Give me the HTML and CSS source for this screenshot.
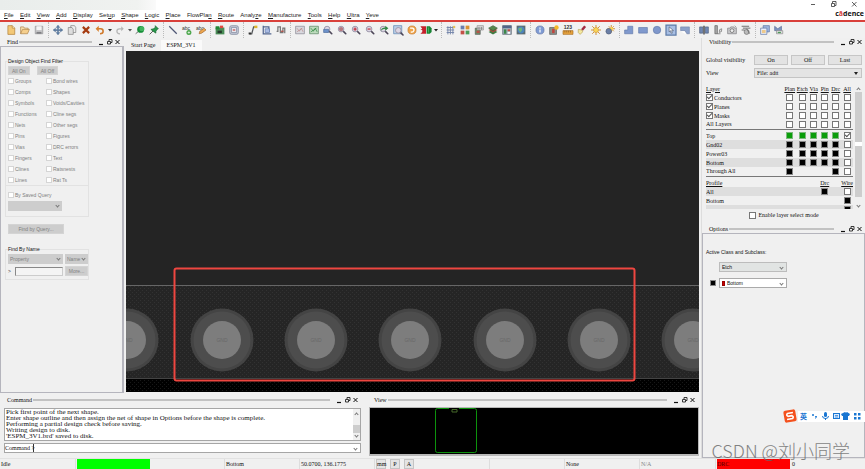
FILE: index.html
```html
<!DOCTYPE html>
<html lang="en">
<head>
<meta charset="utf-8">
<title>PCB Editor</title>
<link rel="stylesheet" href="styles.css">
</head>
<body>
<svg class="defs" aria-hidden="true">
  <symbol id="win" viewBox="0 0 24 8">
    <path d="M2 6.500h4" stroke="#111" stroke-width="1.200"/>
    <path d="M10.500 3.500h3v2.500h-3zM12 3V1.500h3v3h-1" fill="none" stroke="#222" stroke-width=".9"/>
    <path d="M18.500 2l4 4M22.500 2l-4 4" stroke="#111"/>
  </symbol>
  <symbol id="lens" viewBox="0 0 16 16">
    <path d="M9 9l5 5" stroke="#4c4658" stroke-width="2.600" stroke-linecap="round"/>
    <circle cx="6.500" cy="6.500" r="4.500" fill="#dcd6e4" stroke="#9a94a8" stroke-width="1.500"/>
  </symbol>
</svg>

<header class="top">
  <div class="shade"></div>
  <nav class="menu">
    <a href="#"><u>F</u>ile</a><a href="#"><u>E</u>dit</a><a href="#"><u>V</u>iew</a><a href="#"><u>A</u>dd</a><a href="#"><u>D</u>isplay</a><a href="#">Set<u>u</u>p</a><a href="#"><u>S</u>hape</a><a href="#"><u>L</u>ogic</a><a href="#"><u>P</u>lace</a><a href="#">FlowPla<u>n</u></a><a href="#"><u>R</u>oute</a><a href="#">Analy<u>z</u>e</a><a href="#"><u>M</u>anufacture</a><a href="#"><u>T</u>ools</a><a href="#"><u>H</u>elp</a><a href="#"><u>U</u>ltra</a><a href="#"><u>Y</u>eve</a>
  </nav>
  <div class="brand">
    <svg class="window-buttons" viewBox="0 0 50 8"><path d="M2 4.500h4M22.500 3.500h3v3h-3zM23.500 3V1.500h3.500v4h-1M43 2l4.500 4.500M47.500 2L43 6.500" fill="none" stroke="#333" stroke-width=".8"/></svg>
    <div class="logo">c<i>ā</i>dence</div>
  </div>
</header>

<div class="toolbar">
  <div class="group">
    <button aria-label="New"><svg viewBox="0 0 16 16"><path d="M3 1h7l4 4v10H3z" fill="#f3c877" stroke="#a8742c"/><path d="M10 1v4h4" fill="#fff0c8" stroke="#a8742c"/></svg></button>
    <button aria-label="Open"><svg viewBox="0 0 16 16"><path d="M1 14V3h5l1 2h6v3" fill="#f7dfb0" stroke="#a8793c"/><path d="M1 14l3-7h11l-3 7z" fill="#f5cf8d" stroke="#a8793c"/></svg></button>
    <button aria-label="Save"><svg viewBox="0 0 16 16"><path d="M2 2h12v12H2z" fill="#c7c7c9" stroke="#8c8c8e"/><path d="M4 2h8v6H4z" fill="#f5f5f5"/><path d="M4 11h8v3H4z" fill="#808084"/></svg></button>
  </div>
  <div class="group">
    <button aria-label="Move"><svg viewBox="0 0 16 16"><path d="M8 0l3 4H9v3h3V5l4 3-4 3V9H9v3h2l-3 4-3-4h2V9H4v2L0 8l4-3v2h3V4H5z" fill="#5d7da3" stroke="#3e5c80" stroke-width=".5"/></svg></button>
    <button aria-label="Copy"><svg viewBox="0 0 16 16"><path d="M6 1h6l2 3v8H6z" fill="#eee" stroke="#777"/><path d="M2 4h6l2 3v8H2z" fill="#ddd" stroke="#777"/></svg></button>
    <button aria-label="Delete"><svg viewBox="0 0 16 16"><path d="M3 3l10 10M13 3L3 13" stroke="#a53b10" stroke-width="3.500"/></svg></button>
    <button aria-label="Undo"><svg viewBox="0 0 16 16"><path d="M4 6h5q4 0 4 4t-5 4" fill="none" stroke="#d07a2c" stroke-width="2.500"/><path d="M6 1v10L1 6z" fill="#d9812e"/></svg></button>
    <button class="more" aria-label="Undo list"><svg viewBox="0 0 6 6"><path d="M1 2h4L3 4.500z" fill="#333"/></svg></button>
    <button aria-label="Redo"><svg viewBox="0 0 16 16"><path d="M12 6H7q-4 0-4 4t5 4" fill="none" stroke="#b5b5b5" stroke-width="2"/><path d="M10 2v8l4-4z" fill="#b5b5b5"/></svg></button>
    <button class="more" aria-label="Redo list"><svg viewBox="0 0 6 6"><path d="M1 2h4L3 4.500z" fill="#555"/></svg></button>
    <button aria-label="Unpin"><svg viewBox="0 0 16 16"><path d="M1 14l6-5" stroke="#666" stroke-width="1.500"/><circle cx="9" cy="7" r="5.500" fill="#138b36"/><circle cx="11" cy="6" r="4" fill="#41b35d"/></svg></button>
    <button aria-label="Pin"><svg viewBox="0 0 16 16"><path d="M1 15l6-6" stroke="#555" stroke-width="1.500"/><path d="M10 1l5 5-2 1-2 3 0 3-3-2-5-4 4-1 3-2z" fill="#28974a" stroke="#17652e"/></svg></button>
  </div>
  <div class="group">
    <button aria-label="Add line"><svg viewBox="0 0 16 16"><path d="M2 2l12 12" stroke="#4e5674" stroke-width="2"/></svg></button>
    <button aria-label="Add text"><svg viewBox="0 0 16 16"><text x="0" y="8" font-size="8">abc</text><circle cx="11" cy="12" r="4" fill="#48a548"/><path d="M11 10v4M9 12h4" stroke="#fff"/></svg></button>
    <button aria-label="Edit text"><svg viewBox="0 0 16 16"><text x="0" y="8" font-size="8">abc</text><path d="M5 14l1-4 7-5 3 3-7 5z" fill="#eca64f" stroke="#9d6128"/></svg></button>
  </div>
  <div class="group">
    <button aria-label="Place"><svg viewBox="0 0 16 16"><path d="M1 4h14v11H1z" fill="#4a8d57"/><path d="M1 2h6v5H1z" fill="#208736"/><path d="M8 1h5v4H8z" fill="#df4b42"/><path d="M4 9h7v4H4z" fill="#263b2b"/></svg></button>
    <button aria-label="Component"><svg viewBox="0 0 16 16"><rect x="1" y="1" width="14" height="14" rx="3" fill="#bfc5d4" stroke="#777f94"/><path d="M4 4h8v8H4z" fill="#e7e7ee" stroke="#7c8398"/><path d="M6 8h4" stroke="#c35048" stroke-width="2"/></svg></button>
  </div>
  <div class="group">
    <button aria-label="Route"><svg viewBox="0 0 16 16"><path d="M2 14h4l3-11h5" fill="none" stroke="#55585b" stroke-width="2"/><path d="M10 1h5v4h-5z" fill="#dfb52c"/><path d="M1 12h4v3H1z" fill="#333"/></svg></button>
    <button aria-label="Slide"><svg viewBox="0 0 16 16"><path d="M2 1v13h13M2 3h9v8" fill="none" stroke="#52658f" stroke-width="2"/><path d="M5 6h7v6H5z" fill="#aabbe2" stroke="#5973ab"/></svg></button>
    <button aria-label="Delay tune"><svg viewBox="0 0 16 16"><path d="M1 10h2V3h4v9h4V5h3v8" fill="none" stroke="#777" stroke-width="2"/><path d="M8 10h4" stroke="#b54c44" stroke-width="2"/></svg></button>
  </div>
  <div class="group">
    <button aria-label="Unrats"><svg viewBox="0 0 16 16"><path d="M1 2h14v12H1z" fill="#d9d9df" stroke="#7d7b89"/><path d="M3 5l4 5 3-5 3 6M3 11l9-6" fill="none" stroke="#b98986"/></svg></button>
    <button aria-label="Rats"><svg viewBox="0 0 16 16"><path d="M1 2h14v12H1z" fill="#bddbbd" stroke="#4c7954"/><path d="M3 5l4 5 3-5 3 6M3 11l9-6" fill="none" stroke="#257e37"/></svg></button>
    <button aria-label="Zoom window"><svg viewBox="0 0 16 16"><use href="#lens"/><path d="M1 7h8v5H1z" fill="#6d91c9" stroke="#47669a"/></svg></button>
    <button aria-label="Zoom fit"><svg viewBox="0 0 16 16"><use href="#lens"/><circle cx="6.500" cy="6.500" r="3.500" fill="#b47a82"/></svg></button>
    <button aria-label="Zoom in"><svg viewBox="0 0 16 16"><use href="#lens"/><path d="M4 6.500h5M6.500 4v5" stroke="#c33540" stroke-width="2"/></svg></button>
    <button aria-label="Zoom out"><svg viewBox="0 0 16 16"><use href="#lens"/><path d="M4 6.500h5" stroke="#c33540" stroke-width="2"/></svg></button>
    <button aria-label="Zoom previous"><svg viewBox="0 0 16 16"><use href="#lens"/><path d="M3 9q1-5 7-5V1l5 4-5 4V6q-4 0-7 3z" fill="#2e8843"/></svg></button>
    <button aria-label="Zoom selection"><svg viewBox="0 0 16 16"><path d="M1 1h13v13H1z" fill="#b9d0e9" stroke="#527aac"/><use href="#lens" x="2" y="2"/></svg></button>
    <button aria-label="Refresh"><svg viewBox="0 0 16 16"><circle cx="8" cy="8" r="6.500" fill="#efa449" stroke="#c07427"/><path d="M5 5h4q3 1 2 4t-5 2" fill="none" stroke="#fff" stroke-width="2"/></svg></button>
    <button aria-label="3D view"><svg viewBox="0 0 16 16"><path d="M-1 2h9v12h-9l3-3V8h-3l3-2z" fill="#c5202b"/><path d="M9 2h5l3 3v6l-3 3H9z" fill="#188434"/><path d="M12 4v8" stroke="#63bd75"/></svg></button>
    <button class="more" aria-label="Views"><svg viewBox="0 0 6 6"><path d="M1 2h4L3 4.500z" fill="#222"/></svg></button>
  </div>
  <div class="group">
    <button aria-label="Grid"><svg viewBox="0 0 16 16"><path d="M1 4h12M1 8h12M1 12h12M3 2v13M7 2v13M11 2v13" stroke="#7485aa" stroke-width="1.500"/><circle cx="13" cy="3" r="2" fill="#e6c35b"/></svg></button>
    <button aria-label="Colors"><svg viewBox="0 0 16 16"><path d="M1 1h6v6H1z" fill="#687cae"/><path d="M9 1h6v6H9z" fill="#d99233"/><path d="M1 9h6v6H1z" fill="#c35047"/><path d="M9 9h6v6H9z" fill="#4c9c58"/></svg></button>
    <button aria-label="Shadow"><svg viewBox="0 0 16 16"><path d="M2 5h8v10H2z" fill="#69946b" stroke="#555"/><path d="M5 1h10v7H5z" fill="#ddd" stroke="#888"/><path d="M8 3v5M12 3v5M5 5h9" stroke="#777"/><path d="M4 9h5v4H4z" fill="#b85349"/></svg></button>
    <button aria-label="Layers"><svg viewBox="0 0 16 16"><path d="M1 11l7-4 7 4-7 4z" fill="#407d44"/><path d="M1 8l7-4 7 4-7 4z" fill="#a24c3c"/><path d="M1 5l7-4 7 4-7 4z" fill="#55874d" stroke="#375b37"/></svg></button>
    <button aria-label="Constraint manager"><svg viewBox="0 0 16 16"><path d="M1 1h14v14H1z" fill="#a4b0bd" stroke="#57606b"/><path d="M1 1h14v4H1z" fill="#52658a"/><path d="M3 7h4v7H3z" fill="#3c8749"/><path d="M9 7h4v3H9z" fill="#c44b40"/><path d="M9 11h4v3H9z" fill="#fff"/></svg></button>
    <button aria-label="World"><svg viewBox="0 0 16 16"><path d="M1 1h14v14H1z" fill="#5c6c70"/><circle cx="8" cy="8" r="5.500" fill="#4c84bd"/><path d="M4 5l5-1 1 4-3 4-3-4z" fill="#72b478"/></svg></button>
  </div>
  <div class="group">
    <button aria-label="Info"><svg viewBox="0 0 16 16"><circle cx="8" cy="8" r="6.500" fill="#7f9bd4" stroke="#6577a4"/><path d="M8 7v5M8 4v2" stroke="#fff" stroke-width="2"/></svg></button>
    <button aria-label="Status"><svg viewBox="0 0 16 16"><path d="M1 4h11v11H1z" fill="#8a928b" stroke="#555"/><path d="M5 6h4v7H5z" fill="#c4443d"/><circle cx="12" cy="4" r="3.500" fill="#f4b829"/></svg></button>
    <button aria-label="Measure"><svg viewBox="0 0 16 16"><text x="1" y="7" font-size="8" font-weight="bold">123</text><path d="M0 9h16v6H0z" fill="#e6a33e" stroke="#a56b1e"/><path d="M3 9v3M6 9v3M9 9v3M12 9v3" stroke="#875719"/></svg></button>
    <button aria-label="Highlight"><svg viewBox="0 0 16 16"><path d="M8 8l5-6" stroke="#a22c43" stroke-width="4"/><path d="M2 7l6 1 1 3-4 4-3-3z" fill="#f4e8a0" stroke="#b09c50"/></svg></button>
    <button aria-label="Sun"><svg viewBox="0 0 16 16"><path d="M8 0v16M0 8h16M2 2l12 12M14 2L2 14" stroke="#cf8c32" stroke-width="1.500"/><circle cx="8" cy="8" r="4" fill="#f9d65a" stroke="#d29733"/></svg></button>
    <button aria-label="Dim"><svg viewBox="0 0 16 16"><path d="M10 0v12M4 6h12M6 2l8 8M14 2L6 10" stroke="#cf8c32" stroke-width="1.500"/><circle cx="10" cy="6" r="3" fill="#f9d65a"/><circle cx="6" cy="10" r="4.500" fill="#6b7fa6" stroke="#4e5b77"/></svg></button>
  </div>
  <div class="group">
    <button aria-label="Polygon"><svg viewBox="0 0 16 16"><path d="M6 2h8v12H1V8h5z" fill="#8099cd" stroke="#5e76a7"/></svg></button>
    <button aria-label="Rectangle"><svg viewBox="0 0 16 16"><path d="M1 4h14v9H1z" fill="#8099cd" stroke="#5e76a7"/></svg></button>
    <button aria-label="Circle"><svg viewBox="0 0 16 16"><circle cx="8" cy="8" r="6" fill="#7f97cb" stroke="#5e76a7"/></svg></button>
    <button aria-label="Select shape"><svg viewBox="0 0 16 16"><path d="M0 0h16v16H0z" fill="#a8bfe4" stroke="#5e7ca8" stroke-width="2"/><path d="M5 3l7 6H9l1 4-2 0-1-4-2 2z" fill="#fff" stroke="#49566d"/></svg></button>
    <button aria-label="Void"><svg viewBox="0 0 16 16"><path d="M1 3h14v11h-4L8 9H1z" fill="#8ba0c9" stroke="#7284aa"/><path d="M1 10h6l3 5z" fill="#fff"/></svg></button>
  </div>
  <div class="group">
    <button aria-label="Mirror"><svg viewBox="0 0 16 16"><path d="M1 3h5v10H1zM10 3h5v10h-5z" fill="#6f87b4" stroke="#4a5a78"/><path d="M8 1v14" stroke="#333" stroke-width="2"/></svg></button>
    <button aria-label="Align"><svg viewBox="0 0 16 16"><path d="M3 1h4v13H3z" fill="#aaa" stroke="#555"/><path d="M7 14h5" stroke="#555"/><path d="M14 6q-5 0-4 6 5 0 4-6z" fill="#ddd" stroke="#666"/></svg></button>
    <button aria-label="Snapshot"><svg viewBox="0 0 16 16"><path d="M1 5h4l1-2h5l1 2h3v9H1z" fill="#c8c8ca" stroke="#77777a"/><circle cx="8" cy="9" r="3" fill="#eee" stroke="#555"/><path d="M12 1l3 3" stroke="#666"/></svg></button>
    <button aria-label="Artwork"><svg viewBox="0 0 16 16"><path d="M1 2h12M3 5h12M1 8h5" stroke="#666" stroke-width="1.500"/><circle cx="9" cy="11" r="4" fill="#bbb" stroke="#666"/><path d="M9 6l5 8" stroke="#555"/></svg></button>
  </div>
  <div class="group">
    <button aria-label="Windows"><svg viewBox="0 0 16 16"><path d="M5 1h10v10H5z" fill="#9db5df" stroke="#536c9b"/><path d="M1 5h10v10H1z" fill="#e9eefb" stroke="#536c9b"/><path d="M3 8h6v5H3z" fill="#eec98b"/></svg></button>
    <button aria-label="Export"><svg viewBox="0 0 16 16"><path d="M1 2l5 4 6-4v7H1z" fill="#7d93bf" stroke="#5b6e96"/><path d="M4 9h10v5H4z" fill="#ddd" stroke="#888"/><path d="M6 12h5" stroke="#4c9c58" stroke-width="2"/></svg></button>
  </div>
</div>

<main class="work">
  <div class="left">
    <div class="upper">
      <section class="find">
        <div class="dock-title"><span>Find</span><hr><svg><use href="#win"/></svg></div>
        <div class="find-body">
          <fieldset>
            <legend>Design Object Find Filter</legend>
            <div class="pair"><button class="flat">All On</button><button class="flat">All Off</button></div>
            <div class="filters">
              <label><input type="checkbox">Groups</label><label><input type="checkbox">Bond wires</label>
              <label><input type="checkbox">Comps</label><label><input type="checkbox">Shapes</label>
              <label><input type="checkbox">Symbols</label><label><input type="checkbox">Voids/Cavities</label>
              <label><input type="checkbox">Functions</label><label><input type="checkbox">Cline segs</label>
              <label><input type="checkbox">Nets</label><label><input type="checkbox">Other segs</label>
              <label><input type="checkbox">Pins</label><label><input type="checkbox">Figures</label>
              <label><input type="checkbox">Vias</label><label><input type="checkbox">DRC errors</label>
              <label><input type="checkbox">Fingers</label><label><input type="checkbox">Text</label>
              <label><input type="checkbox">Clines</label><label><input type="checkbox">Ratsnests</label>
              <label><input type="checkbox">Lines</label><label><input type="checkbox">Rat Ts</label>
            </div>
          </fieldset>
          <div class="saved">
            <label><input type="checkbox">By Saved Query</label>
            <div class="select gray"><select aria-label="Saved query"><option></option></select></div>
          </div>
          <button class="flat query">Find by Query...</button>
          <fieldset class="by-name">
            <legend>Find By Name</legend>
            <div class="name-grid">
              <div class="select gray"><select aria-label="Kind"><option>Property</option></select></div>
              <div class="select gray"><select aria-label="Match"><option>Name</option></select></div>
              <div class="prompt"><label for="name">&gt;</label><input id="name" type="text"></div>
              <button class="flat">More...</button>
            </div>
          </fieldset>
        </div>
      </section>
      <section class="design">
        <div class="tabs"><button>Start Page</button><button class="active">ESPM_3V1</button></div>
        <svg class="board" viewBox="126 51 573 341" preserveAspectRatio="xMidYMax slice">
          <defs>
            <pattern id="mesh" width="4" height="4" patternUnits="userSpaceOnUse"><path d="M0 0h4v4H0z" fill="#252525"/><path d="M0 0h1v1H0zM2 2h1v1H2z" fill="#323232"/></pattern>
            <pattern id="dots" width="4" height="4" patternUnits="userSpaceOnUse"><path d="M0 0h4v4H0z" fill="#000"/><path d="M0 0h1v1H0zM2 2h1v1H2z" fill="#181818"/></pattern>
            <g id="pad">
              <circle r="31.500" fill="#444"/>
              <circle r="28.500" fill="#4d4d4d"/>
              <circle r="19" fill="#7d7d7d"/>
            </g>
          </defs>
          <path d="M126 51h573v235H126z" fill="#242424"/>
          <path d="M126 286h573v93H126z" fill="url(#mesh)"/>
          <path d="M126 379h573v13H126z" fill="url(#dots)"/>
          <path d="M126 285.500h573" stroke="#666"/>
          <path d="M126 378.500h573" stroke="#444"/>
          <use href="#pad" x="127" y="340"/>
          <use href="#pad" x="222" y="340"/>
          <use href="#pad" x="316" y="340"/>
          <use href="#pad" x="410" y="340"/>
          <use href="#pad" x="505" y="340"/>
          <use href="#pad" x="599" y="340"/>
          <use href="#pad" x="693" y="340"/>
          <g class="net" text-anchor="middle">
            <text x="127" y="342">GND</text><text x="222" y="342">GND</text><text x="316" y="342">GND</text><text x="410" y="342">GND</text><text x="505" y="342">GND</text><text x="599" y="342">GND</text><text x="693" y="342">GND</text>
          </g>
          <rect x="174.500" y="268.500" width="460" height="112" rx="2" fill="none" stroke="#ee4640" stroke-width="2"/>
        </svg>
      </section>
    </div>
    <div class="lower">
      <section class="command">
        <div class="dock-title"><span>Command</span><hr><svg><use href="#win"/></svg></div>
        <div class="log">
          <div class="lines">
            <p>Pick first point of the next shape.</p>
            <p>Enter shape outline and then assign the net of shape in Options before the shape is complete.</p>
            <p>Performing a partial design check before saving.</p>
            <p>Writing design to disk.</p>
            <p>'ESPM_3V1.brd' saved to disk.</p>
          </div>
          <div class="scroll"><i class="up"></i><b></b><i class="down"></i></div>
        </div>
        <div class="entry"><label for="cmd">Command &gt;</label><input id="cmd" type="text"><i class="down"></i></div>
      </section>
      <section class="view">
        <div class="dock-title"><span>View</span><hr><svg><use href="#win"/></svg></div>
        <svg class="overview" viewBox="0 0 328 46" preserveAspectRatio="xMidYMid meet"><rect x="65.500" y=".5" width="41" height="44" rx="2" fill="none" stroke="#0c920c"/><path d="M79 .5h10" stroke="#000" stroke-width="2"/><path d="M82 4V1.500h5V4z" fill="none" stroke="#466b2a"/></svg>
      </section>
    </div>
  </div>

  <aside class="right">
    <section>
      <div class="dock-title"><span>Visibility</span><hr><svg><use href="#win"/></svg></div>
      <div class="vis">
        <div class="row"><span>Global visibility</span><div class="trio"><button>On</button><button>Off</button><button>Last</button></div></div>
        <div class="row"><label for="view">View</label><div class="select solid"><select id="view"><option>File: adtt</option></select></div></div>
        <div class="layers">
          <table>
            <thead><tr><th>Layer</th><th>Plan</th><th>Etch</th><th>Via</th><th>Pin</th><th>Drc</th><th>All</th></tr></thead>
            <tbody>
              <tr><td><label><input type="checkbox" checked>Conductors</label></td><td><input type="checkbox"></td><td><input type="checkbox"></td><td><input type="checkbox"></td><td><input type="checkbox"></td><td><input type="checkbox"></td><td><input type="checkbox"></td></tr>
              <tr><td><label><input type="checkbox" checked>Planes</label></td><td><input type="checkbox"></td><td><input type="checkbox"></td><td><input type="checkbox"></td><td><input type="checkbox"></td><td><input type="checkbox"></td><td><input type="checkbox"></td></tr>
              <tr><td><label><input type="checkbox" checked>Masks</label></td><td><input type="checkbox"></td><td><input type="checkbox"></td><td><input type="checkbox"></td><td><input type="checkbox"></td><td><input type="checkbox"></td><td><input type="checkbox"></td></tr>
              <tr><td>All Layers</td><td><input type="checkbox"></td><td><input type="checkbox"></td><td><input type="checkbox"></td><td><input type="checkbox"></td><td><input type="checkbox"></td><td><input type="checkbox"></td></tr>
            </tbody>
            <tbody class="ruled">
              <tr><td>Top</td><td><input type="checkbox" class="green"></td><td><input type="checkbox" class="green"></td><td><input type="checkbox" class="green"></td><td><input type="checkbox" class="green"></td><td><input type="checkbox" class="green"></td><td><input type="checkbox" checked></td></tr>
              <tr class="alt"><td>Gnd02</td><td><input type="checkbox" class="black"></td><td><input type="checkbox" class="black"></td><td><input type="checkbox" class="black"></td><td><input type="checkbox" class="black"></td><td><input type="checkbox" class="black"></td><td><input type="checkbox"></td></tr>
              <tr><td>Power03</td><td><input type="checkbox" class="black"></td><td><input type="checkbox" class="black"></td><td><input type="checkbox" class="black"></td><td><input type="checkbox" class="black"></td><td><input type="checkbox" class="black"></td><td><input type="checkbox"></td></tr>
              <tr class="alt"><td>Bottom</td><td><input type="checkbox" class="black"></td><td><input type="checkbox" class="black"></td><td><input type="checkbox" class="black"></td><td><input type="checkbox" class="black"></td><td><input type="checkbox" class="black"></td><td><input type="checkbox"></td></tr>
              <tr><td>Through All</td><td><input type="checkbox" class="black"></td><td></td><td></td><td></td><td><input type="checkbox" class="black"></td><td><input type="checkbox"></td></tr>
            </tbody>
            <tbody class="ruled">
              <tr><th>Profile</th><th></th><th></th><th></th><th>Drc</th><th></th><th>Wire</th></tr>
              <tr class="alt"><td>All</td><td></td><td></td><td></td><td><input type="checkbox" class="black"></td><td></td><td><input type="checkbox"></td></tr>
              <tr><td>Bottom</td><td></td><td></td><td></td><td></td><td></td><td><input type="checkbox" class="black"></td></tr>
              <tr class="alt"><td></td><td></td><td></td><td></td><td></td><td></td><td><input type="checkbox" class="black"></td></tr>
            </tbody>
          </table>
          <div class="scroll"><i class="up"></i><b></b><i class="down"></i></div>
        </div>
        <label class="enable"><input type="checkbox">Enable layer select mode</label>
      </div>
    </section>
    <section class="options">
      <div class="dock-title"><span>Options</span><hr><svg><use href="#win"/></svg></div>
      <div class="options-body">
        <p>Active Class and Subclass:</p>
        <div class="class-row"><div class="select tint"><select aria-label="Class"><option>Etch</option></select></div></div>
        <div class="class-row"><input type="checkbox" class="black" aria-label="Visible"><div class="select plain"><span class="chip"></span><select aria-label="Subclass"><option>Bottom</option></select></div></div>
      </div>
    </section>
  </aside>
</main>

<footer class="status">
  <span>Idle</span><span class="go"><b></b></span><span>Bottom</span><span>50.0700, 136.1775</span>
  <span class="modes"><button>mm</button><button>P</button><button>A</button></span>
  <span></span><span>None</span><span class="dim">N/A</span><span class="drc"><b>DRC</b>0</span>
</footer>

<div class="ime">
  <svg viewBox="0 0 84 16">
    <path d="M17 3h67v11H17z" fill="#fff"/>
    <g transform="rotate(-10 9 8)"><rect x="3" y="2" width="12" height="12" rx="2" fill="#f4511e"/><path d="M12.500 5H7q-2 1.500 0 3h4q2 1.500 0 3H5.500" fill="none" stroke="#fff" stroke-width="1.600"/></g>
    <text x="19" y="11" class="ime-text">英</text>
    <g fill="#1976d2" stroke="none">
      <circle cx="32" cy="7" r="1"/><path d="M34 8h2q0 2-2 3 1-1 0-3z"/>
      <rect x="43" y="4" width="3" height="5" rx="1.500"/><path d="M41.500 8q0 2.500 3 2.500t3-2.500" fill="none" stroke="#1976d2"/><path d="M44 10h1v2h-1z"/>
      <path d="M62 5l2-1q1 1 2 0l3 2-1 2h-1v4h-5V8h-1l-1-2z"/>
      <path d="M73 5h2.500v2.500H73zM77 5h2.500v2.500H77zM73 9h2.500v2.500H73zM77 9h2.500v2.500H77z"/>
    </g>
    <rect x="52.500" y="5.500" width="6" height="5" fill="#dcecff" stroke="#1976d2"/><path d="M54 7.500h3M54 9h3" stroke="#1976d2" stroke-width=".7"/>
  </svg>
</div>
<div class="watermark">CSDN @刘小同学</div>
</body>
</html>
```

FILE: styles.css
```css
*, ::before, ::after { box-sizing: border-box; }
body {
  margin: 0;
  min-height: 100vh;
  display: flex;
  flex-direction: column;
  position: relative;
  overflow: hidden;
  background: #f0f0f0;
  color: #111;
  font: 6px/8px "Liberation Serif", serif;
}
button, input, select { font: inherit; color: inherit; margin: 0; padding: 0; border: 0; background: none; border-radius: 0; }
input, select { appearance: none; outline: 0; min-width: 0; }
p, hr, fieldset { margin: 0; padding: 0; border: 0; min-width: 0; }
svg { display: block; }
.defs { position: absolute; width: 0; height: 0; }

/* Menu bar */
.top { display: grid; grid-template-columns: 1fr auto; height: 22px; background: #fff; border-bottom: 2px solid #d9403a; }
.shade { grid-area: 1 / 1; width: 156px; height: 10px; background: linear-gradient(90deg, #e9edeb, #f0f2f0 88%, #fafafa); }
.menu { grid-area: 1 / 1; align-self: end; display: flex; justify-content: space-between; max-width: 383px; padding: 0 4px 1px; font: 6px/8px "Liberation Sans", sans-serif; }
.menu a { color: #222; text-decoration: none; }
.brand { grid-area: 1 / 2; display: flex; flex-direction: column; align-items: flex-end; }
.window-buttons { width: 50px; height: 8px; margin: 0 6px 2px 0; }
.logo { padding-right: 1px; font: bold 7px/8px "Open Sans", sans-serif; }
.logo i { color: #d9403a; font-style: normal; }

/* Toolbar */
.toolbar { display: flex; height: 16px; padding: 0 4px; background: #f1f1f1; }
.group { display: flex; align-items: center; }
.group + .group { margin-left: 2px; padding-left: 2px; border-left: 1px dotted #bbb; }
.group button { width: 14px; height: 14px; padding: 2px; }
.group button svg { width: 10px; height: 10px; overflow: visible; }
.group .more { width: 6px; padding: 0; }
.group .more svg { width: 6px; height: 6px; }
.group text { font-family: "Liberation Sans", sans-serif; fill: #333; }

/* Dock frames */
.work { flex: 1; display: grid; grid-template-columns: minmax(0, 1fr) 164px; }
.left { display: flex; flex-direction: column; min-width: 0; }
.upper { flex: 1; display: grid; grid-template-columns: 124px minmax(0, 1fr); }
.lower { display: grid; grid-template-columns: 362fr 337fr; padding: 3px 2px 2px 0; }
.dock-title { display: flex; align-items: center; height: 8px; padding: 0 3px 0 7px; gap: 1px; }
.dock-title hr { flex: 1; height: 2px; background: #c2c2c2; margin-right: 4px; }
.dock-title svg { width: 24px; height: 8px; }

/* Find */
.find { display: flex; flex-direction: column; font: 5px/8px "Liberation Sans", sans-serif; color: #808080; }
.dock-title span { font: 6px/8px "Liberation Serif", serif; color: #111; }
.find-body { flex: 1; padding: 10px 33px 0 4px; border: 1px solid #b5b5bd; border-right-width: 2px; }
.find fieldset { border: 1px solid #e2e2e2; padding: 0 2px; }
.find legend { padding: 0; color: #111; }
.pair { display: flex; gap: 7px; padding-top: 1px; }
.flat { height: 9px; padding: 0 3px; background: #cdcdcd; line-height: 8px; color: #808080; border: 1px solid #d4d4d4; }
.filters { display: grid; grid-template-columns: 38px 1fr; grid-auto-rows: 11px; align-items: center; }
.filters label, .saved label { display: flex; align-items: center; gap: 1px; white-space: nowrap; }
.filters input, .saved input { flex: none; width: 6px; height: 6px; background: #fff; border: 1px solid #d5d5d5; }
.saved { display: grid; gap: 2px; padding: 5px 26px 5px 2px; border: 1px solid #e2e2e2; border-top: 0; }
.query { display: block; width: 56px; height: 10px; margin: 7px 0 11px 3px; }
.find .by-name { padding-right: 0; }
.name-grid { display: grid; grid-template-columns: 55px 1fr; gap: 2px; padding: 1px 0 3px; }
.name-grid .flat { height: 10px; padding: 0; }
.prompt { display: flex; gap: 4px; align-items: center; color: #333; }
.prompt input { flex: 1; height: 9px; border: 1px solid #ccc; border-top-color: #888; border-left-color: #888; background: #f4f4f4; }

/* Drop-downs */
.select { position: relative; display: flex; align-items: center; height: 10px; }
.select select { flex: 1; width: 100%; height: 100%; padding-left: 2px; line-height: 8px; }
.select::after, .up, .down { content: ""; width: 3px; height: 3px; border: solid #777; border-width: 0 1px 1px 0; transform: rotate(45deg); }
.select::after { position: absolute; right: 3px; top: 3px; }
.up { transform: rotate(225deg); }
.gray { background: #cdcdcd; }
.solid { background: #e4e4e4; border: 1px solid #c4c4c4; }
.solid::after { width: 0; height: 0; border: 2px solid transparent; border-top: 3px solid #222; border-bottom: 0; transform: none; }
.tint { background: #e1e4e3; border: 1px solid #bcbcbc; }
.plain { background: #fff; border: 1px solid #aaa; }

/* Design canvas */
.design { display: flex; flex-direction: column; min-width: 0; padding: 2px 2px 1px 2px; }
.tabs { display: flex; height: 11px; }
.tabs button { padding: 0 5px; line-height: 11px; }
.tabs .active { background: #fafafa; padding: 0 6px; }
.board { flex: 1; width: 100%; min-height: 0; }
.net { font: 5px "Liberation Sans", sans-serif; fill: #686868; }

/* Command */
.log { display: flex; height: 33px; margin: 4px 1px 2px 4px; background: #fff; border: 1px solid #a6a6a6; overflow: hidden; }
.lines { flex: 1; display: flex; flex-direction: column; justify-content: flex-end; font-size: 7px; line-height: 6px; padding: 0 1px 1px; white-space: nowrap; }
.scroll { display: flex; flex-direction: column; align-items: center; justify-content: space-between; width: 7px; padding: 4px 0 3px; background: #f0f0f0; }
.log .scroll b { width: 7px; height: 8px; margin-top: 8px; background: #cdcdcd; }
.entry { display: flex; align-items: center; height: 10px; margin: 0 1px 0 4px; background: #fff; border: 1px solid #a6a6a6; padding-right: 3px; }
.entry label { width: 28px; white-space: nowrap; }
.entry input { flex: 1; height: 8px; border-left: 1px solid #333; }
.view { padding-left: 7px; }
.view .dock-title { padding-left: 5px; }
.overview { width: 100%; height: 49px; margin-top: 3px; background: #000; border: 1px solid #b8b8b8; border-bottom-width: 2px; }

/* Visibility */
.right { display: flex; flex-direction: column; border-left: 1px solid #ddd; }
.right .dock-title { padding-left: 7px; padding-right: 2px; }
.vis { padding: 9px 3px 0 4px; }
.row { display: grid; grid-template-columns: 48px 1fr; align-items: center; margin-bottom: 3px; }
.trio { display: grid; grid-template-columns: repeat(3, 1fr); gap: 3px; }
.trio button { height: 10px; background: #e3e3e3; border: 1px solid #c6c6c6; line-height: 8px; }
.layers { display: flex; height: 125px; margin: 6px 0 0; overflow: hidden; }
table { flex: 1; border-collapse: collapse; table-layout: fixed; align-self: flex-start; line-height: 8px; }
th, td { height: 9px; padding: 0; text-align: center; font-weight: normal; }
th { text-decoration: underline; }
th:first-child, td:first-child { text-align: left; }
thead th { width: 11px; }
thead th:first-child { width: auto; }
thead th:nth-child(2) { width: 13px; }
thead th:nth-child(3) { width: 12px; }
.ruled tr:first-child > * { height: 11px; padding-top: 2px; border-top: 1px solid #777; }
.alt { background: #dedede; }
.right td label { display: flex; align-items: center; gap: 1px; }
.right input { position: relative; display: block; flex: none; width: 7px; height: 7px; margin: 0 auto; background: #fff; border: 1px solid #777; }
.right label input { margin: 0; }
.right input:checked::after { content: ""; position: absolute; left: 0; top: 0; width: 5px; height: 3px; border: solid #555; border-width: 0 0 1px 1px; transform: rotate(-45deg); }
.right .green { background: #0a9d0a; border-color: #7bb87b; }
.right .black { background: #000; border-color: #888; }
.layers .scroll { margin-left: 2px; padding: 4px 0 2px; }
.layers .scroll b { flex: 1; width: 7px; margin: 1px 0 7px; background: linear-gradient(#cdcdcd 50px, #fff 50px, #fff 54px, #cdcdcd 54px); }
.enable { display: flex; justify-content: center; align-items: center; gap: 2px; height: 12px; }

/* Options */
.options { flex: 1; display: flex; flex-direction: column; margin-top: 4px; }
.options-body { flex: 1; padding: 14px 3px 0; border: 1px solid #b5b5bd; font: 5px/8px "Liberation Sans", sans-serif; }
.class-row { display: flex; align-items: center; justify-content: flex-end; gap: 3px; margin: 6px 74px 0 4px; }
.options .class-row .select { width: 68px; }
.right .class-row input { width: 6px; height: 6px; margin: 0; }
.chip { width: 3px; height: 5px; margin-left: 2px; background: #c00; border: 1px solid #900; }

/* Status bar */
.status { display: grid; grid-template-columns: 75fr 149fr 75fr 75fr 115fr 75fr 75fr 76fr 150fr; height: 12px; border-top: 1px solid #e2e2e2; line-height: 11px; }
.status > span { display: flex; padding-left: 1px; white-space: nowrap; border-left: 1px solid #ddd; }
.status > span:first-child { border: 0; }
.go b { width: 73px; background: #0f0; }
.status .modes { gap: 4px; }
.modes button { width: 10px; height: 10px; background: #e4e4e4; border: 1px solid #c4c4c4; line-height: 8px; }
.dim { color: #888; }
.drc { gap: 2px; }
.drc b { width: 73px; background: #f00; color: #500; font-weight: normal; }

/* Floating overlays */
.ime { position: absolute; right: 0; bottom: 46px; width: 84px; }
.ime-text { font: bold 7px "Noto Sans CJK SC", sans-serif; fill: #1976d2; }
.watermark { position: absolute; right: 15px; bottom: 8px; font: 300 18px/24px "Noto Sans CJK SC", sans-serif; color: #666; opacity: .8; white-space: nowrap; }
```
